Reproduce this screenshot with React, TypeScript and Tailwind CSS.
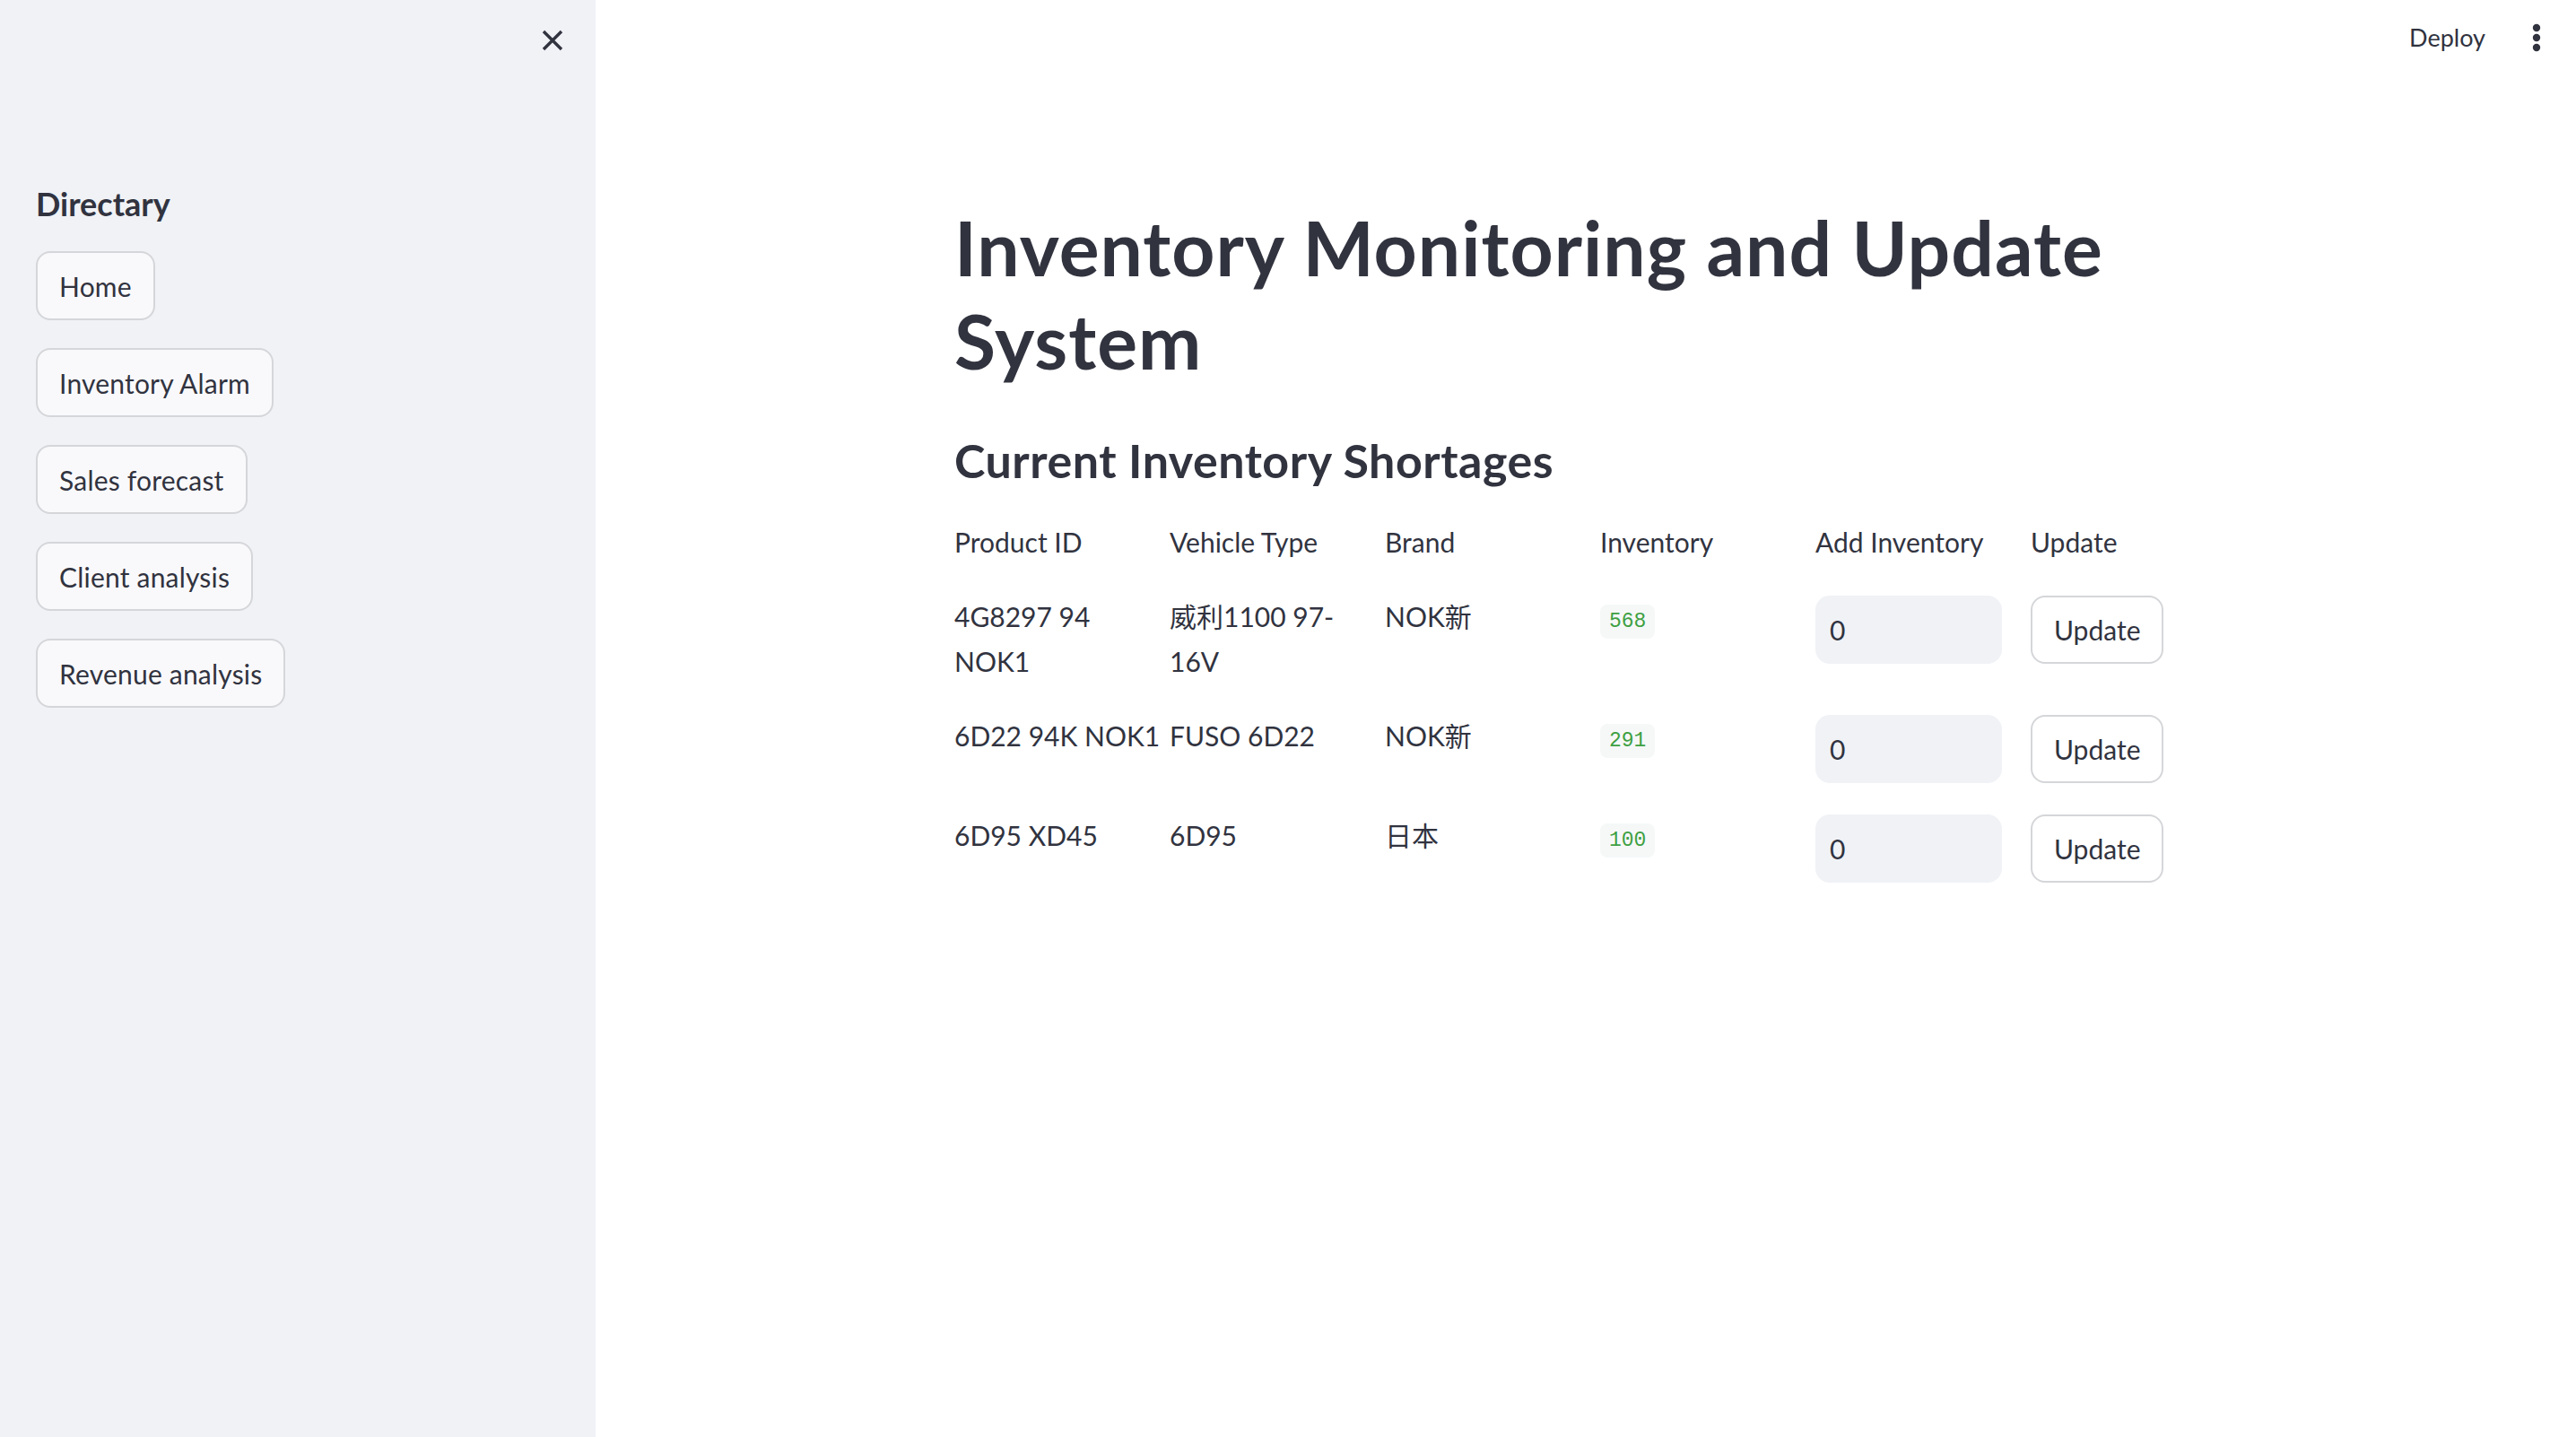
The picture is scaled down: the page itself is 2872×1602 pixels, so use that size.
import { useState } from 'react'

const navItems = ['Home', 'Inventory Alarm', 'Sales forecast', 'Client analysis', 'Revenue analysis']

const headers = ['Product ID', 'Vehicle Type', 'Brand', 'Inventory', 'Add Inventory', 'Update']

// oneLine: the id fits on one line in the original font, Lato is a bit wider
const rows = [
  { id: '4G8297 94 NOK1', vehicle: '威利1100 97-16V', brand: 'NOK新', inventory: 568, oneLine: false },
  { id: '6D22 94K NOK1', vehicle: 'FUSO 6D22', brand: 'NOK新', inventory: 291, oneLine: true },
  { id: '6D95 XD45', vehicle: '6D95', brand: '日本', inventory: 100, oneLine: true },
]

const font = "font-['Lato','Noto_Sans_CJK_SC',sans-serif]"

export default function App() {
  const [amounts, setAmounts] = useState<string[]>(rows.map(() => '0'))

  return (
    <div className={`flex min-h-[1602px] w-full bg-white text-[#31333f] ${font}`}>
      {/* Sidebar */}
      <aside className="w-[664px] shrink-0 bg-[#f0f2f6]">
        <div className="flex h-[90px] items-center justify-end pr-[35px]">
          <svg width="26" height="26" viewBox="0 0 26 26" fill="none" stroke="#31333f" strokeWidth="3.4">
            <path d="M3 3L23 23M23 3L3 23" />
          </svg>
        </div>
        <div className="px-[40px] pt-[114px]">
          <h3 className="text-[36px] font-bold leading-[46px]">Directary</h3>
          <div className="mt-[30px] flex flex-col items-start gap-[31px]">
            {navItems.map((item) => (
              <button
                key={item}
                className="flex h-[77px] items-center rounded-[16px] border-2 border-[#d5d6d9] bg-[#f9f9fb] px-[24px] text-[30px] leading-[50px] tracking-[0.2px]"
              >
                {item}
              </button>
            ))}
          </div>
        </div>
      </aside>

      {/* Main */}
      <main className="flex min-w-0 flex-1 flex-col">
        <div className="flex h-[84px] items-center justify-end pr-[39px]">
          <span className="text-[27px]">Deploy</span>
          <svg className="ml-[52px]" width="10" height="32" viewBox="0 0 10 32" fill="#31333f">
            <circle cx="5" cy="5" r="4.2" />
            <circle cx="5" cy="16" r="4.2" />
            <circle cx="5" cy="27" r="4.2" />
          </svg>
        </div>

        <div className="mx-auto w-[1408px]">
          <h1 className="mt-[140px] text-[84px] font-bold leading-[104px] tracking-[1px]">
            Inventory Monitoring and Update System
          </h1>
          <h3 className="mt-[50px] text-[52px] font-bold leading-[62px] tracking-[0.5px]">Current Inventory Shortages</h3>

          <div className="mt-[35px] flex gap-[32px] text-[30px] leading-[50px]">
            {headers.map((h) => (
              <div key={h} className="w-[208px]">{h}</div>
            ))}
          </div>

          {rows.map((r, i) => (
            <div key={r.id} className="mt-[33px] flex items-start gap-[32px] text-[30px] leading-[50px]">
              <div className={r.oneLine ? 'w-[208px] whitespace-nowrap' : 'w-[208px]'}>{r.id}</div>
              <div className="w-[208px]">{r.vehicle}</div>
              <div className="w-[208px]">{r.brand}</div>
              <div className="w-[208px]">
                <span className="rounded-[8px] bg-[#f6f8f8] px-[10px] py-[6px] font-['Liberation_Mono',monospace] text-[23px] text-[#3ea043]">
                  {r.inventory}
                </span>
              </div>
              <div className="mt-[2px] w-[208px]">
                <input
                  value={amounts[i]}
                  onChange={(e) => setAmounts((prev) => prev.map((a, j) => (j === i ? e.target.value : a)))}
                  className="h-[76px] w-full rounded-[16px] border-2 border-[#f0f2f6] bg-[#f0f2f6] px-[14px] text-[30px] text-[#31333f] outline-none"
                />
              </div>
              <div className="mt-[2px] w-[208px]">
                <button className="flex h-[76px] items-center rounded-[16px] border-2 border-[#d5d6d9] bg-white px-[24px] text-[30px]">
                  Update
                </button>
              </div>
            </div>
          ))}
        </div>
      </main>
    </div>
  )
}
